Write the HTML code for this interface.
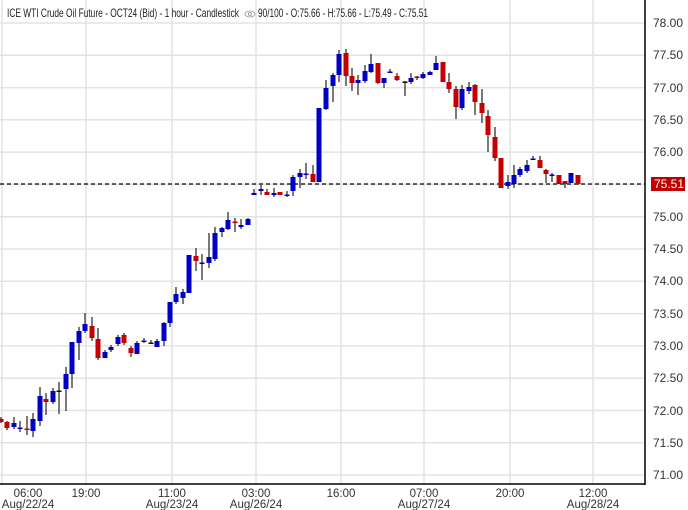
<!DOCTYPE html>
<html><head><meta charset="utf-8"><style>
html,body{margin:0;padding:0;background:#fff;}
body{width:688px;height:510px;overflow:hidden;font-family:"Liberation Sans",sans-serif;}
svg{display:block}
</style></head><body>
<svg width="688" height="510" xmlns="http://www.w3.org/2000/svg" font-family="Liberation Sans, sans-serif">
<g stroke="#e3e3e3" stroke-width="1.5">
<line x1="0" y1="23" x2="645" y2="23"/><line x1="0" y1="55.3" x2="645" y2="55.3"/><line x1="0" y1="87.6" x2="645" y2="87.6"/><line x1="0" y1="119.8" x2="645" y2="119.8"/><line x1="0" y1="152.1" x2="645" y2="152.1"/><line x1="0" y1="184.4" x2="645" y2="184.4"/><line x1="0" y1="216.7" x2="645" y2="216.7"/><line x1="0" y1="249" x2="645" y2="249"/><line x1="0" y1="281.3" x2="645" y2="281.3"/><line x1="0" y1="313.6" x2="645" y2="313.6"/><line x1="0" y1="345.9" x2="645" y2="345.9"/><line x1="0" y1="378.2" x2="645" y2="378.2"/><line x1="0" y1="410.5" x2="645" y2="410.5"/><line x1="0" y1="442.7" x2="645" y2="442.7"/><line x1="0" y1="475" x2="645" y2="475"/>
<line x1="2" y1="0" x2="2" y2="484"/><line x1="86" y1="0" x2="86" y2="484"/><line x1="172" y1="0" x2="172" y2="484"/><line x1="256" y1="0" x2="256" y2="484"/><line x1="341" y1="0" x2="341" y2="484"/><line x1="424" y1="0" x2="424" y2="484"/><line x1="510" y1="0" x2="510" y2="484"/><line x1="593" y1="0" x2="593" y2="484"/>
</g>
<line x1="0" y1="184" x2="645" y2="184" stroke="#000" stroke-width="1.3" stroke-dasharray="4,3"/>
<g id="c" stroke="#333" stroke-width="1.3">
<line x1="1" y1="417" x2="1" y2="423"/><rect x="-1.5" y="419" width="5" height="3" fill="#c40000" stroke="none"/>
<line x1="7" y1="421" x2="7" y2="430"/><rect x="4.5" y="422" width="5" height="6" fill="#c40000" stroke="none"/>
<line x1="14" y1="417" x2="14" y2="429"/><rect x="11.5" y="423" width="5" height="4" fill="#0000c4" stroke="none"/>
<line x1="20" y1="421" x2="20" y2="432"/><rect x="17.5" y="427.5" width="5" height="1.5" fill="#0000c4" stroke="none"/>
<line x1="27" y1="416" x2="27" y2="435"/><rect x="24.5" y="428.5" width="5" height="1.5" fill="#c40000" stroke="none"/>
<line x1="33" y1="413" x2="33" y2="437"/><rect x="30.5" y="419" width="5" height="12" fill="#0000c4" stroke="none"/>
<line x1="40" y1="387" x2="40" y2="426"/><rect x="37.5" y="396" width="5" height="25" fill="#0000c4" stroke="none"/>
<line x1="46" y1="393" x2="46" y2="415"/><rect x="43.5" y="399" width="5" height="3" fill="#c40000" stroke="none"/>
<line x1="53" y1="388" x2="53" y2="404"/><rect x="50.5" y="391" width="5" height="11" fill="#0000c4" stroke="none"/>
<line x1="59" y1="382" x2="59" y2="414"/><rect x="56.5" y="390.5" width="5" height="1.5" fill="#111" stroke="none"/>
<line x1="66" y1="367" x2="66" y2="411"/><rect x="63.5" y="374" width="5" height="15" fill="#0000c4" stroke="none"/>
<line x1="72" y1="342" x2="72" y2="388"/><rect x="69.5" y="342" width="5" height="32" fill="#0000c4" stroke="none"/>
<line x1="79" y1="327" x2="79" y2="360"/><rect x="76.5" y="331" width="5" height="12" fill="#0000c4" stroke="none"/>
<line x1="85" y1="313" x2="85" y2="333"/><rect x="82.5" y="324" width="5" height="7" fill="#0000c4" stroke="none"/>
<line x1="92" y1="317" x2="92" y2="341"/><rect x="89.5" y="326" width="5" height="12" fill="#c40000" stroke="none"/>
<line x1="98" y1="328" x2="98" y2="360"/><rect x="95.5" y="339" width="5" height="19" fill="#c40000" stroke="none"/>
<line x1="105" y1="350" x2="105" y2="358"/><rect x="102.5" y="352" width="5" height="6" fill="#0000c4" stroke="none"/>
<line x1="111" y1="345" x2="111" y2="352"/><rect x="108.5" y="347" width="5" height="3" fill="#0000c4" stroke="none"/>
<line x1="118" y1="335" x2="118" y2="346"/><rect x="115.5" y="337" width="5" height="7" fill="#0000c4" stroke="none"/>
<line x1="124" y1="333" x2="124" y2="345"/><rect x="121.5" y="335" width="5" height="8" fill="#c40000" stroke="none"/>
<line x1="131" y1="346" x2="131" y2="357"/><rect x="128.5" y="348" width="5" height="5" fill="#c40000" stroke="none"/>
<line x1="137" y1="341" x2="137" y2="354"/><rect x="134.5" y="343" width="5" height="11" fill="#0000c4" stroke="none"/>
<line x1="144" y1="338" x2="144" y2="343"/><rect x="141.5" y="340.5" width="5" height="1.5" fill="#0000c4" stroke="none"/>
<line x1="151" y1="340" x2="151" y2="344"/><rect x="148.5" y="342.5" width="5" height="1.5" fill="#111" stroke="none"/>
<line x1="157" y1="339" x2="157" y2="347"/><rect x="154.5" y="341" width="5" height="6" fill="#0000c4" stroke="none"/>
<line x1="164" y1="322" x2="164" y2="346"/><rect x="161.5" y="323" width="5" height="18" fill="#0000c4" stroke="none"/>
<line x1="170" y1="302" x2="170" y2="327"/><rect x="167.5" y="302" width="5" height="21" fill="#0000c4" stroke="none"/>
<line x1="176" y1="287" x2="176" y2="304"/><rect x="173.5" y="294" width="5" height="8" fill="#0000c4" stroke="none"/>
<line x1="183" y1="289" x2="183" y2="304"/><rect x="180.5" y="292" width="5" height="6" fill="#0000c4" stroke="none"/>
<line x1="189" y1="255" x2="189" y2="293"/><rect x="186.5" y="255" width="5" height="38" fill="#0000c4" stroke="none"/>
<line x1="196" y1="248" x2="196" y2="271"/><rect x="193.5" y="256" width="5" height="5" fill="#c40000" stroke="none"/>
<line x1="202" y1="254" x2="202" y2="280"/><rect x="199.5" y="262.5" width="5" height="1.5" fill="#0000c4" stroke="none"/>
<line x1="209" y1="233" x2="209" y2="268"/><rect x="206.5" y="257" width="5" height="6" fill="#0000c4" stroke="none"/>
<line x1="215" y1="227" x2="215" y2="261"/><rect x="212.5" y="233" width="5" height="26" fill="#0000c4" stroke="none"/>
<line x1="222" y1="227" x2="222" y2="237"/><rect x="219.5" y="228" width="5" height="4" fill="#0000c4" stroke="none"/>
<line x1="228" y1="212" x2="228" y2="230"/><rect x="225.5" y="220" width="5" height="9" fill="#0000c4" stroke="none"/>
<line x1="235" y1="218" x2="235" y2="232"/><rect x="232.5" y="221.5" width="5" height="1.5" fill="#c40000" stroke="none"/>
<line x1="241" y1="219" x2="241" y2="229"/><rect x="238.5" y="225" width="5" height="2" fill="#0000c4" stroke="none"/>
<line x1="248" y1="218" x2="248" y2="225"/><rect x="245.5" y="219" width="5" height="6" fill="#0000c4" stroke="none"/>
<line x1="254" y1="189" x2="254" y2="195"/><rect x="251.5" y="193" width="5" height="2" fill="#0000c4" stroke="none"/>
<line x1="261" y1="185" x2="261" y2="195"/><rect x="258.5" y="189" width="5" height="2" fill="#0000c4" stroke="none"/>
<line x1="267" y1="189" x2="267" y2="195"/><rect x="264.5" y="192" width="5" height="3" fill="#c40000" stroke="none"/>
<line x1="274" y1="188" x2="274" y2="197"/><rect x="271.5" y="193" width="5" height="2" fill="#0000c4" stroke="none"/>
<line x1="280" y1="192" x2="280" y2="195"/><rect x="277.5" y="192" width="5" height="3" fill="#c40000" stroke="none"/>
<line x1="287" y1="191" x2="287" y2="197"/><rect x="284.5" y="194.5" width="5" height="1.5" fill="#0000c4" stroke="none"/>
<line x1="293" y1="175" x2="293" y2="196"/><rect x="290.5" y="177" width="5" height="14" fill="#0000c4" stroke="none"/>
<line x1="300" y1="169" x2="300" y2="188"/><rect x="297.5" y="173" width="5" height="4" fill="#0000c4" stroke="none"/>
<line x1="306" y1="163" x2="306" y2="179"/><rect x="303.5" y="173.5" width="5" height="1.5" fill="#0000c4" stroke="none"/>
<line x1="313" y1="165" x2="313" y2="182"/><rect x="310.5" y="174" width="5" height="8" fill="#c40000" stroke="none"/>
<line x1="319" y1="108" x2="319" y2="182"/><rect x="316.5" y="108" width="5" height="74" fill="#0000c4" stroke="none"/>
<line x1="326" y1="80" x2="326" y2="110"/><rect x="323.5" y="88" width="5" height="21" fill="#0000c4" stroke="none"/>
<line x1="333" y1="73" x2="333" y2="102"/><rect x="330.5" y="75" width="5" height="11" fill="#0000c4" stroke="none"/>
<line x1="339" y1="50" x2="339" y2="82"/><rect x="336.5" y="54" width="5" height="21" fill="#0000c4" stroke="none"/>
<line x1="346" y1="49" x2="346" y2="86"/><rect x="343.5" y="53" width="5" height="23" fill="#c40000" stroke="none"/>
<line x1="352" y1="68" x2="352" y2="91"/><rect x="349.5" y="76" width="5" height="7" fill="#c40000" stroke="none"/>
<line x1="358" y1="75" x2="358" y2="95"/><rect x="355.5" y="80" width="5" height="3" fill="#0000c4" stroke="none"/>
<line x1="365" y1="65" x2="365" y2="83"/><rect x="362.5" y="71" width="5" height="10" fill="#0000c4" stroke="none"/>
<line x1="371" y1="54" x2="371" y2="73"/><rect x="368.5" y="64" width="5" height="8" fill="#0000c4" stroke="none"/>
<line x1="378" y1="63" x2="378" y2="84"/><rect x="375.5" y="63" width="5" height="20" fill="#c40000" stroke="none"/>
<line x1="384" y1="78" x2="384" y2="88"/><rect x="381.5" y="78" width="5" height="5" fill="#0000c4" stroke="none"/>
<line x1="390" y1="69" x2="390" y2="73"/><rect x="387.5" y="71.5" width="5" height="1.5" fill="#0000c4" stroke="none"/>
<line x1="397" y1="73" x2="397" y2="81"/><rect x="394.5" y="76" width="5" height="4" fill="#c40000" stroke="none"/>
<line x1="405" y1="81" x2="405" y2="96"/><rect x="402.5" y="81.5" width="5" height="1.5" fill="#111" stroke="none"/>
<line x1="411" y1="73" x2="411" y2="84"/><rect x="408.5" y="78" width="5" height="4" fill="#0000c4" stroke="none"/>
<line x1="417" y1="76" x2="417" y2="80"/><rect x="414.5" y="76.5" width="5" height="1.5" fill="#c40000" stroke="none"/>
<line x1="423" y1="72" x2="423" y2="79"/><rect x="420.5" y="74" width="5" height="4" fill="#0000c4" stroke="none"/>
<line x1="430" y1="71" x2="430" y2="75"/><rect x="427.5" y="72" width="5" height="3" fill="#0000c4" stroke="none"/>
<line x1="436" y1="56" x2="436" y2="70"/><rect x="433.5" y="63" width="5" height="7" fill="#0000c4" stroke="none"/>
<line x1="443" y1="62" x2="443" y2="82"/><rect x="440.5" y="62" width="5" height="20" fill="#c40000" stroke="none"/>
<line x1="449" y1="73" x2="449" y2="93"/><rect x="446.5" y="82" width="5" height="7" fill="#c40000" stroke="none"/>
<line x1="456" y1="86" x2="456" y2="119"/><rect x="453.5" y="89" width="5" height="18" fill="#c40000" stroke="none"/>
<line x1="462" y1="85" x2="462" y2="110"/><rect x="459.5" y="89" width="5" height="19" fill="#0000c4" stroke="none"/>
<line x1="469" y1="82" x2="469" y2="94"/><rect x="466.5" y="87" width="5" height="4" fill="#0000c4" stroke="none"/>
<line x1="475" y1="84" x2="475" y2="115"/><rect x="472.5" y="85" width="5" height="17" fill="#c40000" stroke="none"/>
<line x1="482" y1="89" x2="482" y2="123"/><rect x="479.5" y="103" width="5" height="10" fill="#c40000" stroke="none"/>
<line x1="488" y1="110" x2="488" y2="152"/><rect x="485.5" y="116" width="5" height="19" fill="#c40000" stroke="none"/>
<line x1="495" y1="127" x2="495" y2="161"/><rect x="492.5" y="137" width="5" height="21" fill="#c40000" stroke="none"/>
<line x1="501" y1="158" x2="501" y2="188"/><rect x="498.5" y="158" width="5" height="30" fill="#c40000" stroke="none"/>
<line x1="508" y1="175" x2="508" y2="189"/><rect x="505.5" y="182" width="5" height="4" fill="#0000c4" stroke="none"/>
<line x1="514" y1="165" x2="514" y2="188"/><rect x="511.5" y="175" width="5" height="9" fill="#0000c4" stroke="none"/>
<line x1="520" y1="167" x2="520" y2="177"/><rect x="517.5" y="169" width="5" height="6" fill="#0000c4" stroke="none"/>
<line x1="527" y1="160" x2="527" y2="173"/><rect x="524.5" y="165" width="5" height="6" fill="#0000c4" stroke="none"/>
<line x1="533" y1="156" x2="533" y2="160"/><rect x="530.5" y="158.5" width="5" height="1.5" fill="#0000c4" stroke="none"/>
<line x1="540" y1="156" x2="540" y2="168"/><rect x="537.5" y="160" width="5" height="8" fill="#c40000" stroke="none"/>
<line x1="546" y1="169" x2="546" y2="183"/><rect x="543.5" y="170" width="5" height="4" fill="#c40000" stroke="none"/>
<line x1="552" y1="173" x2="552" y2="182"/><rect x="549.5" y="174.5" width="5" height="1.5" fill="#0000c4" stroke="none"/>
<line x1="559" y1="175" x2="559" y2="184"/><rect x="556.5" y="175" width="5" height="9" fill="#c40000" stroke="none"/>
<line x1="565" y1="181" x2="565" y2="188"/><rect x="562.5" y="181" width="5" height="3" fill="#c40000" stroke="none"/>
<line x1="571" y1="173" x2="571" y2="183"/><rect x="568.5" y="173" width="5" height="10" fill="#0000c4" stroke="none"/>
<line x1="578" y1="175" x2="578" y2="185"/><rect x="575.5" y="175" width="5" height="9" fill="#c40000" stroke="none"/>
</g>
<line x1="645" y1="0" x2="645" y2="485" stroke="#000" stroke-width="1.5"/>
<line x1="0" y1="484" x2="645" y2="484" stroke="#000" stroke-width="1.5"/>
<text x="7" y="17" font-size="12" fill="#222" textLength="232" lengthAdjust="spacingAndGlyphs">ICE WTI Crude Oil Future - OCT24 (Bid) - 1 hour - Candlestick</text>
<g transform="translate(250,14)" fill="none" stroke="#999" stroke-width="0.8"><ellipse cx="0" cy="0" rx="5" ry="3"/><circle cx="0" cy="0" r="1.6"/></g>
<text x="258" y="17" font-size="12" fill="#222" textLength="170" lengthAdjust="spacingAndGlyphs">90/100 - O:75.66 - H:75.66 - L:75.49 - C:75.51</text>
<g font-size="12" fill="#333">
<text x="653" y="27">78.00</text><text x="653" y="59">77.50</text><text x="653" y="92">77.00</text><text x="653" y="124">76.50</text><text x="653" y="156">76.00</text><text x="653" y="221">75.00</text><text x="653" y="253">74.50</text><text x="653" y="285">74.00</text><text x="653" y="318">73.50</text><text x="653" y="350">73.00</text><text x="653" y="382">72.50</text><text x="653" y="415">72.00</text><text x="653" y="447">71.50</text><text x="653" y="479">71.00</text>
</g>
<rect x="651" y="177" width="34" height="14" fill="#c00000"/>
<text x="654" y="188" font-size="12" fill="#fff">75.51</text>
<g font-size="11.5" fill="#333" text-anchor="middle">
<text x="28" y="497">06:00</text><text x="28" y="508">Aug/22/24</text>
<text x="86" y="497">19:00</text>
<text x="172" y="497">11:00</text><text x="172" y="508">Aug/23/24</text>
<text x="256" y="497">03:00</text><text x="256" y="508">Aug/26/24</text>
<text x="341" y="497">16:00</text>
<text x="424" y="497">07:00</text><text x="424" y="508">Aug/27/24</text>
<text x="510" y="497">20:00</text>
<text x="593" y="497">12:00</text><text x="593" y="508">Aug/28/24</text>
</g>
</svg>
</body></html>
